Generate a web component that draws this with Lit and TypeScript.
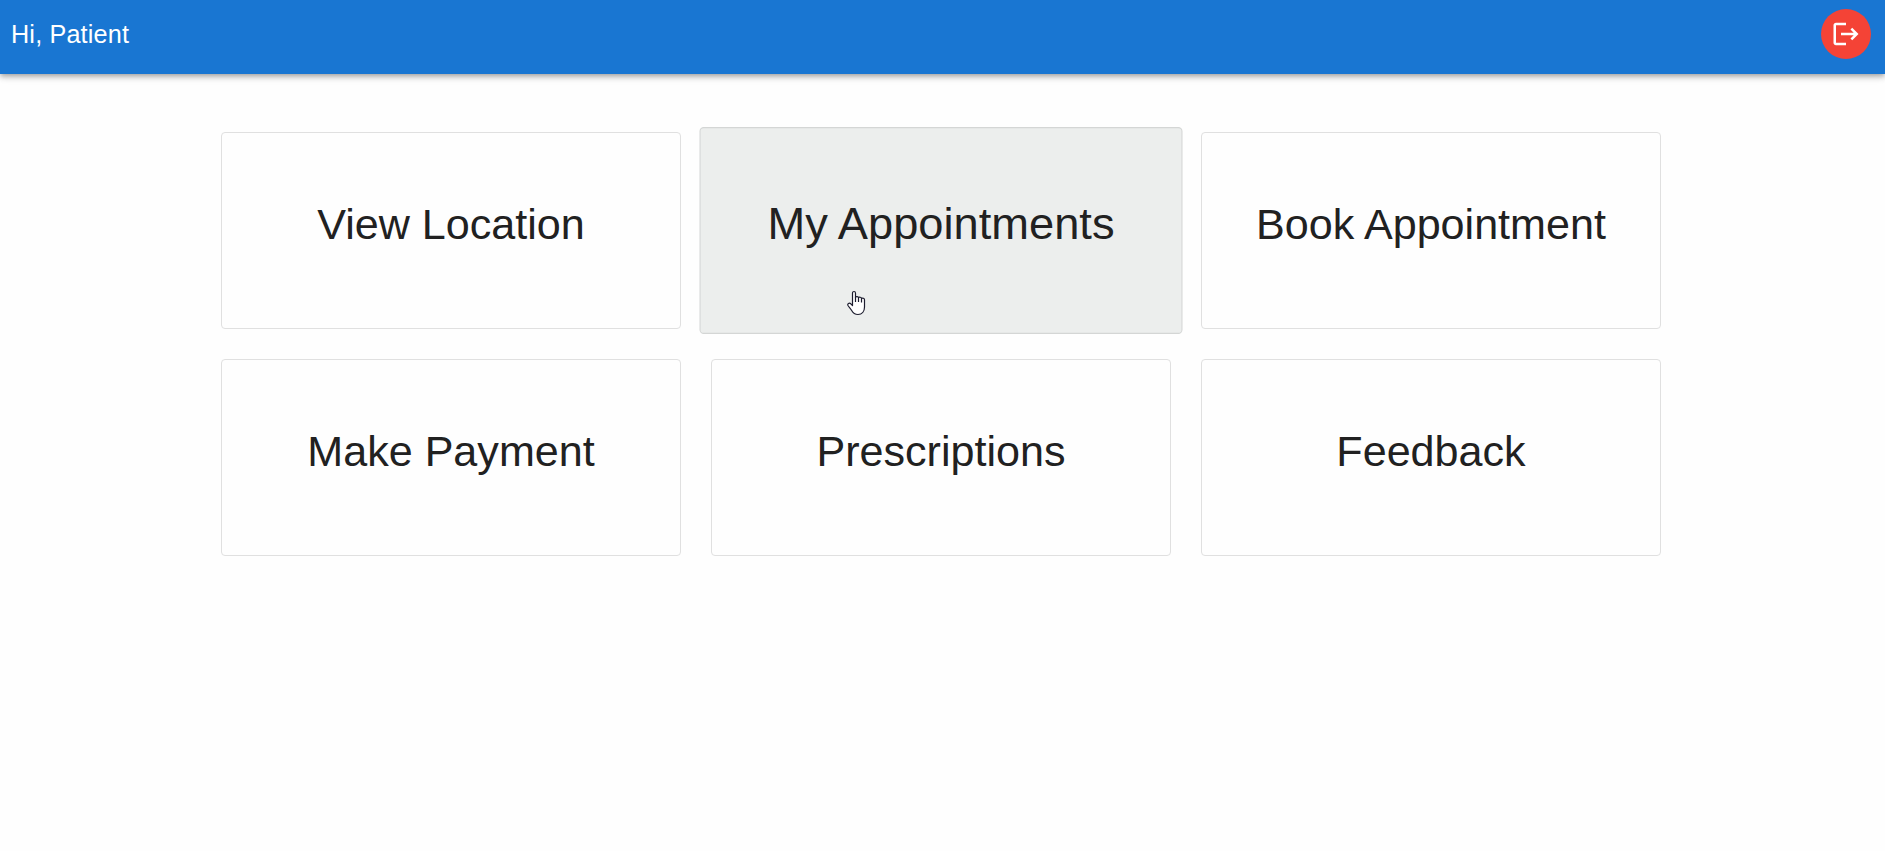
import { LitElement, html, css } from "lit";
import { customElement, property } from "lit/decorators.js";
import { classMap } from "lit/directives/class-map.js";

@customElement("menu-card")
class MenuCard extends LitElement {
  @property() label = "";
  @property({ type: Boolean }) active = false;

  static styles = css`
    :host { display: block; }
    .card {
      box-sizing: border-box;
      height: 197px;
      padding-top: 66px;
      border: 1px solid #e0e0e0;
      border-radius: 4px;
      background: #fefefe;
      cursor: pointer;
    }
    .active {
      background: #eceeed;
      border-color: #d4d6d5;
      transform: scale(1.05);
    }
    .title {
      margin: 0;
      font-weight: 400;
      font-size: 43.1px;
      line-height: 50px;
      text-align: center;
      white-space: nowrap;
      color: #212121;
    }
  `;

  render() {
    return html`<div class=${classMap({ card: true, active: this.active })}>
      <h3 class="title">${this.label}</h3>
    </div>`;
  }
}

@customElement("app-root")
class AppRoot extends LitElement {
  static styles = css`
    :host {
      display: block;
      position: relative;
      min-height: 100vh;
      background: #fefefe;
      font-family: "Liberation Sans", Arial, sans-serif;
    }
    .bar {
      box-sizing: border-box;
      display: flex;
      justify-content: space-between;
      align-items: center;
      height: 74px;
      padding: 0 14px 6px 11px;
      background: #1976d2;
      color: #fff;
      box-shadow: 0 2px 4px -1px rgba(0, 0, 0, 0.2),
        0 4px 5px 0 rgba(0, 0, 0, 0.14), 0 1px 10px 0 rgba(0, 0, 0, 0.12);
    }
    .greeting {
      font-size: 25.2px;
      line-height: 34px;
      letter-spacing: 0.17px;
    }
    .logout {
      display: flex;
      align-items: center;
      justify-content: center;
      width: 50px;
      height: 50px;
      padding: 0;
      border: 0;
      border-radius: 50%;
      background: #f44336;
      color: #fff;
    }
    .logout svg { width: 30px; height: 30px; fill: currentColor; }
    .grid {
      display: grid;
      grid-template-columns: repeat(3, 460px);
      gap: 30px;
      width: 1440px;
      padding: 58px 0 0 221px;
    }
    .pointer {
      position: absolute;
      left: 847px;
      top: 290px;
      width: 19px;
      height: 26px;
      pointer-events: none;
    }
  `;

  private items = [
    "View Location",
    "My Appointments",
    "Book Appointment",
    "Make Payment",
    "Prescriptions",
    "Feedback",
  ];

  render() {
    return html`
      <header class="bar">
        <span class="greeting">Hi, Patient</span>
        <button class="logout" aria-label="Log out">
          <svg viewBox="0 0 24 24">
            <path d="m17 7-1.41 1.41L18.17 11H8v2h10.17l-2.58 2.58L17 17l5-5zM4 5h8V3H4c-1.1 0-2 .9-2 2v14c0 1.1.9 2 2 2h8v-2H4z" />
          </svg>
        </button>
      </header>
      <main class="grid">
        ${this.items.map(
          (label) => html`<menu-card .label=${label} .active=${label === "My Appointments"}></menu-card>`
        )}
      </main>
      <svg class="pointer" viewBox="0 0 19 26">
        <path
          d="M5.5 15.5V3.2C5.5 .9 8.5 .9 8.5 3.2V7.2C9.2 6.3 11.3 6.4 11.6 7.6C12.4 6.9 14.2 7.2 14.5 8.4C15.6 7.6 17.5 8.2 17.5 9.8V17C17.5 21.5 15 24.5 11 24.5C7.5 24.5 5.7 22.5 4.5 20.3C3.5 18.6 2 17.2 1 15.5C.1 13.7 2.3 12.4 3.8 13.8Z"
          fill="#fff" stroke="#1c1c2e" stroke-width="1.2" stroke-linejoin="round"
        />
        <path d="M8.5 7V12M11.5 7.5V12M14.5 8.3V12.5" fill="none" stroke="#1c1c2e" stroke-width="1.2" />
      </svg>
    `;
  }
}
